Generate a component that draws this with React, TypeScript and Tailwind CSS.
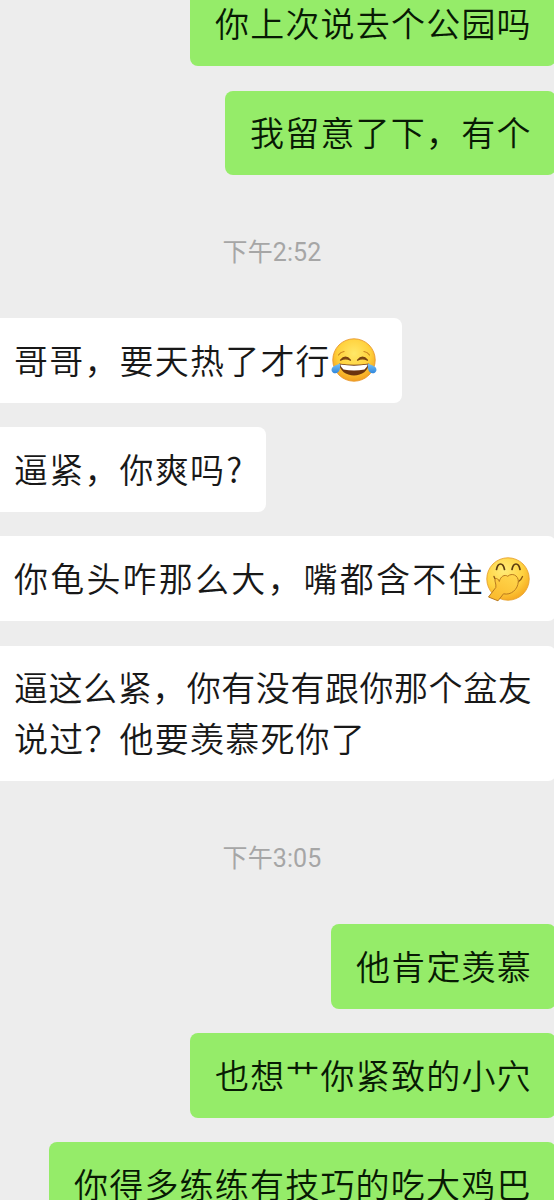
import type { ReactNode } from "react";

type Message = {
  from: "me" | "them";
  lines: ReactNode[];
  className: string;
};

function JoyEmoji() {
  return (
    <svg viewBox="0 0 48 48" className="-ml-px mt-0.5 h-12 w-12 shrink-0">
      <defs>
        <radialGradient id="joyFace" cx="0.5" cy="0.35" r="0.65">
          <stop offset="0" stopColor="#ffe868" />
          <stop offset="0.6" stopColor="#ffd03a" />
          <stop offset="1" stopColor="#f3a01f" />
        </radialGradient>
        <linearGradient id="tear" x1="0" y1="0" x2="0" y2="1">
          <stop offset="0" stopColor="#7cc4f5" />
          <stop offset="1" stopColor="#2f86dc" />
        </linearGradient>
      </defs>
      <circle cx="24" cy="24" r="21.2" fill="url(#joyFace)" stroke="#e8962a" strokeWidth="0.9" />
      <path d="M8.500 19Q10.500 16 14 15.500M39.500 19Q37.500 16 34 15.500" stroke="#c98420" strokeWidth="1.200" fill="none" strokeLinecap="round" />
      <path d="M10.500 24.200Q15.500 18 20.500 24.200Q15.500 21.400 10.500 24.200ZM27.500 24.200Q32.500 18 37.500 24.200Q32.500 21.400 27.500 24.200Z" fill="#7a4310" stroke="#7a4310" strokeWidth="1.200" strokeLinejoin="round" />
      <path d="M9 27.500Q24 30 39 27.500C38.500 34.500 32 39.500 24 39.500S9.500 34.500 9 27.500Z" fill="#6b340f" />
      <path d="M10.200 28.500Q24 30.800 37.800 28.500Q37 31.500 34.500 33.500Q24 35.300 13.500 33.500Q11 31.500 10.200 28.500Z" fill="#fff" />
      <path d="M9.800 27.300C11 32.500 9.500 37 5.500 37.300C2 37.500 .500 34 2.300 31.500C4 29.300 7.500 29.300 9.800 27.300Z" fill="url(#tear)" />
      <path d="M38.200 27.300C37 32.500 38.500 37 42.500 37.300C46 37.500 47.500 34 45.700 31.500C44 29.300 40.500 29.300 38.200 27.300Z" fill="url(#tear)" />
    </svg>
  );
}

function GiggleEmoji() {
  return (
    <svg viewBox="0 0 48 48" className="-ml-px mt-0.5 h-12 w-12 shrink-0">
      <defs>
        <radialGradient id="giggleFace" cx="0.4" cy="0.3" r="0.75">
          <stop offset="0" stopColor="#ffec78" />
          <stop offset="0.6" stopColor="#ffd240" />
          <stop offset="1" stopColor="#f5a51e" />
        </radialGradient>
        <linearGradient id="hand" x1="0.8" y1="0" x2="0.2" y2="1">
          <stop offset="0" stopColor="#ffd64c" />
          <stop offset="1" stopColor="#fbb92c" />
        </linearGradient>
      </defs>
      <circle cx="24" cy="24" r="21.2" fill="url(#giggleFace)" stroke="#e8a02a" strokeWidth="0.9" />
      <path d="M12.500 14.500Q13.500 9 16.500 9T20.500 14.500M28 14.500Q29 9 32 9T36 14.500" stroke="#5c3a10" strokeWidth="1.700" fill="none" strokeLinecap="round" />
      <path d="M10 21.500Q10.500 23.500 12 24.500M38.500 21.500Q37 25.500 34 27" stroke="#8a5615" strokeWidth="1.300" fill="none" strokeLinecap="round" />
      <path
        d="M14 45.800L19.500 38.800C27 40.500 34 34.500 34.300 26.500C34.500 20 27.500 17.500 23.800 21.300C20.500 19 16.500 21.500 15.300 26.500C14.500 23.500 11.500 22.500 11 24.500C10.500 26.500 12.500 29 11.800 32.500L4.500 42Z"
        fill="url(#hand)"
        stroke="#b9791f"
        strokeWidth="1"
        strokeLinejoin="round"
      />
    </svg>
  );
}

const before: Message[] = [
  { from: "me", lines: ["你上次说去个公园吗"], className: "w-[366px]" },
  { from: "me", lines: ["我留意了下，有个"], className: "w-[331px]" },
];

const middle: Message[] = [
  {
    from: "them",
    lines: [
      <>
        哥哥，要天热了才行
        <JoyEmoji />
      </>,
    ],
    className: "w-[402px]",
  },
  {
    from: "them",
    lines: [
      <>
        逼紧，你爽吗<span className="ml-px">?</span>
      </>,
    ],
    className: "w-[265.5px]",
  },
  {
    from: "them",
    lines: [
      <>
        <span className="tracking-[2.2px]">你龟头咋那么大，嘴都含不住</span>
        <GiggleEmoji />
      </>,
    ],
    className: "w-[556px]",
  },
  {
    from: "them",
    lines: [
      <span className="tracking-[0.55px]">逼这么紧，你有没有跟你那个盆友</span>,
      "说过？他要羡慕死你了",
    ],
    className: "w-[556px]",
  },
];

const after: Message[] = [
  { from: "me", lines: ["他肯定羡慕"], className: "w-[225px]" },
  { from: "me", lines: ["也想艹你紧致的小穴"], className: "w-[366px]" },
  { from: "me", lines: ["你得多练练有技巧的吃大鸡巴"], className: "w-[507px]" },
];

function Bubble({ from, lines, className }: Message) {
  const side =
    from === "me"
      ? "self-end -mr-0.5 rounded-lg bg-[#95ec69] pl-[25px] text-[#081a04]"
      : "self-start rounded-r-lg bg-white pl-3.5 text-[#181818]";
  return (
    <div className={`shrink-0 pb-[17.800px] pt-[15.800px] ${side} ${className}`}>
      {lines.map((line, i) => (
        <div key={i} className="flex h-[51px] items-center whitespace-nowrap">
          {line}
        </div>
      ))}
    </div>
  );
}

function Group({ messages }: { messages: Message[] }) {
  return (
    <div className="flex flex-col gap-[24.600px]">
      {messages.map((m, i) => (
        <Bubble key={i} {...m} />
      ))}
    </div>
  );
}

function TimeLabel({ children }: { children: ReactNode }) {
  return (
    <div className="flex h-[142.800px] items-center justify-center pr-2.5 pt-3 font-['Roboto','Noto_Sans_CJK_SC',sans-serif] text-[25px] font-normal tracking-[0.1px] text-[#a6a6a6]">
      {children}
    </div>
  );
}

export default function App() {
  return (
    <div className="h-[1200px] w-[554px] overflow-hidden bg-[#ededed] font-['Noto_Sans_CJK_SC',sans-serif] text-[34px] font-[350] tracking-[1.200px]">
      <div className="-mt-[18.600px]">
        <Group messages={before} />
        <TimeLabel>下午2:52</TimeLabel>
        <Group messages={middle} />
        <TimeLabel>下午3:05</TimeLabel>
        <Group messages={after} />
      </div>
    </div>
  );
}
